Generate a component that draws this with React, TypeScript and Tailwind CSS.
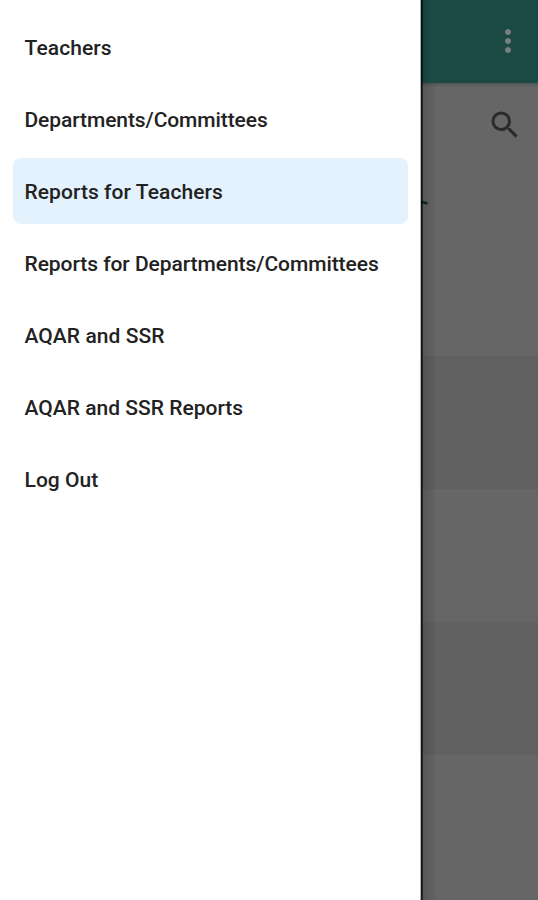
import { MdMoreVert, MdSearch } from "react-icons/md";

const items = [
  { label: "Teachers", tracking: "tracking-[0.08px]" },
  { label: "Departments/Committees", tracking: "tracking-[-0.09px]" },
  { label: "Reports for Teachers", tracking: "tracking-[0.06px]", active: true },
  { label: "Reports for Departments/Committees", tracking: "tracking-[-0.06px]" },
  { label: "AQAR and SSR", tracking: "tracking-[0.06px]" },
  { label: "AQAR and SSR Reports", tracking: "tracking-[0.01px]" },
  { label: "Log Out", tracking: "tracking-[0.04px]" },
];

export default function App() {
  return (
    <div className="flex h-[900px] w-[538px] overflow-hidden bg-[#666666] font-['Roboto',sans-serif]">
      <nav className="w-[421px] shrink-0 border-r border-[#b4b4b4] bg-white pl-[12.5px] pr-[12px] pt-[14px]">
        <ul className="flex flex-col gap-[6px]">
          {items.map((item) => (
            <li
              key={item.label}
              className={`flex h-[66px] items-center whitespace-nowrap rounded-lg pl-3 pt-[3px] text-[21px] font-medium text-[#222222] ${item.tracking} ${item.active ? "bg-[#e3f2fd]" : ""}`}
            >
              {item.label}
            </li>
          ))}
        </ul>
      </nav>
      <main className="relative flex min-w-0 flex-1 flex-col bg-[#666666]">
        <header className="flex h-[83px] shrink-0 justify-end bg-[#1b4a44] pr-[12.5px] pt-[23px]">
          <MdMoreVert className="size-9 text-[#7b7f7f]" />
        </header>
        <div className="h-[4px] shrink-0 bg-linear-to-b from-[#505655] to-[#666666]" />
        <div className="flex h-[114px] shrink-0 justify-end pr-[15.5px] pt-[20px]">
          <MdSearch className="size-9 text-[#2b2b2b]" />
        </div>
        <svg className="h-[4px] w-[7px] shrink-0" viewBox="0 0 7 4" fill="none">
          <path d="M0 1.3H2.5L6.5 2.5" stroke="#0c2b30" strokeWidth="2.4" />
        </svg>
        <div className="h-[151px] shrink-0" />
        <div className="h-[133px] shrink-0 bg-[#616161]" />
        <div className="h-[133px] shrink-0" />
        <div className="h-[133px] shrink-0 bg-[#616161]" />
        <div className="absolute bottom-0 left-0 top-[83px] w-[16px] bg-linear-to-r from-black/18 to-transparent" />
        <div className="absolute left-0 top-0 h-[83px] w-[10px] bg-linear-to-r from-black/15 to-transparent" />
        <div className="absolute inset-y-0 left-0 w-[2px] bg-linear-to-r from-black/80 to-black/50" />
      </main>
    </div>
  );
}
